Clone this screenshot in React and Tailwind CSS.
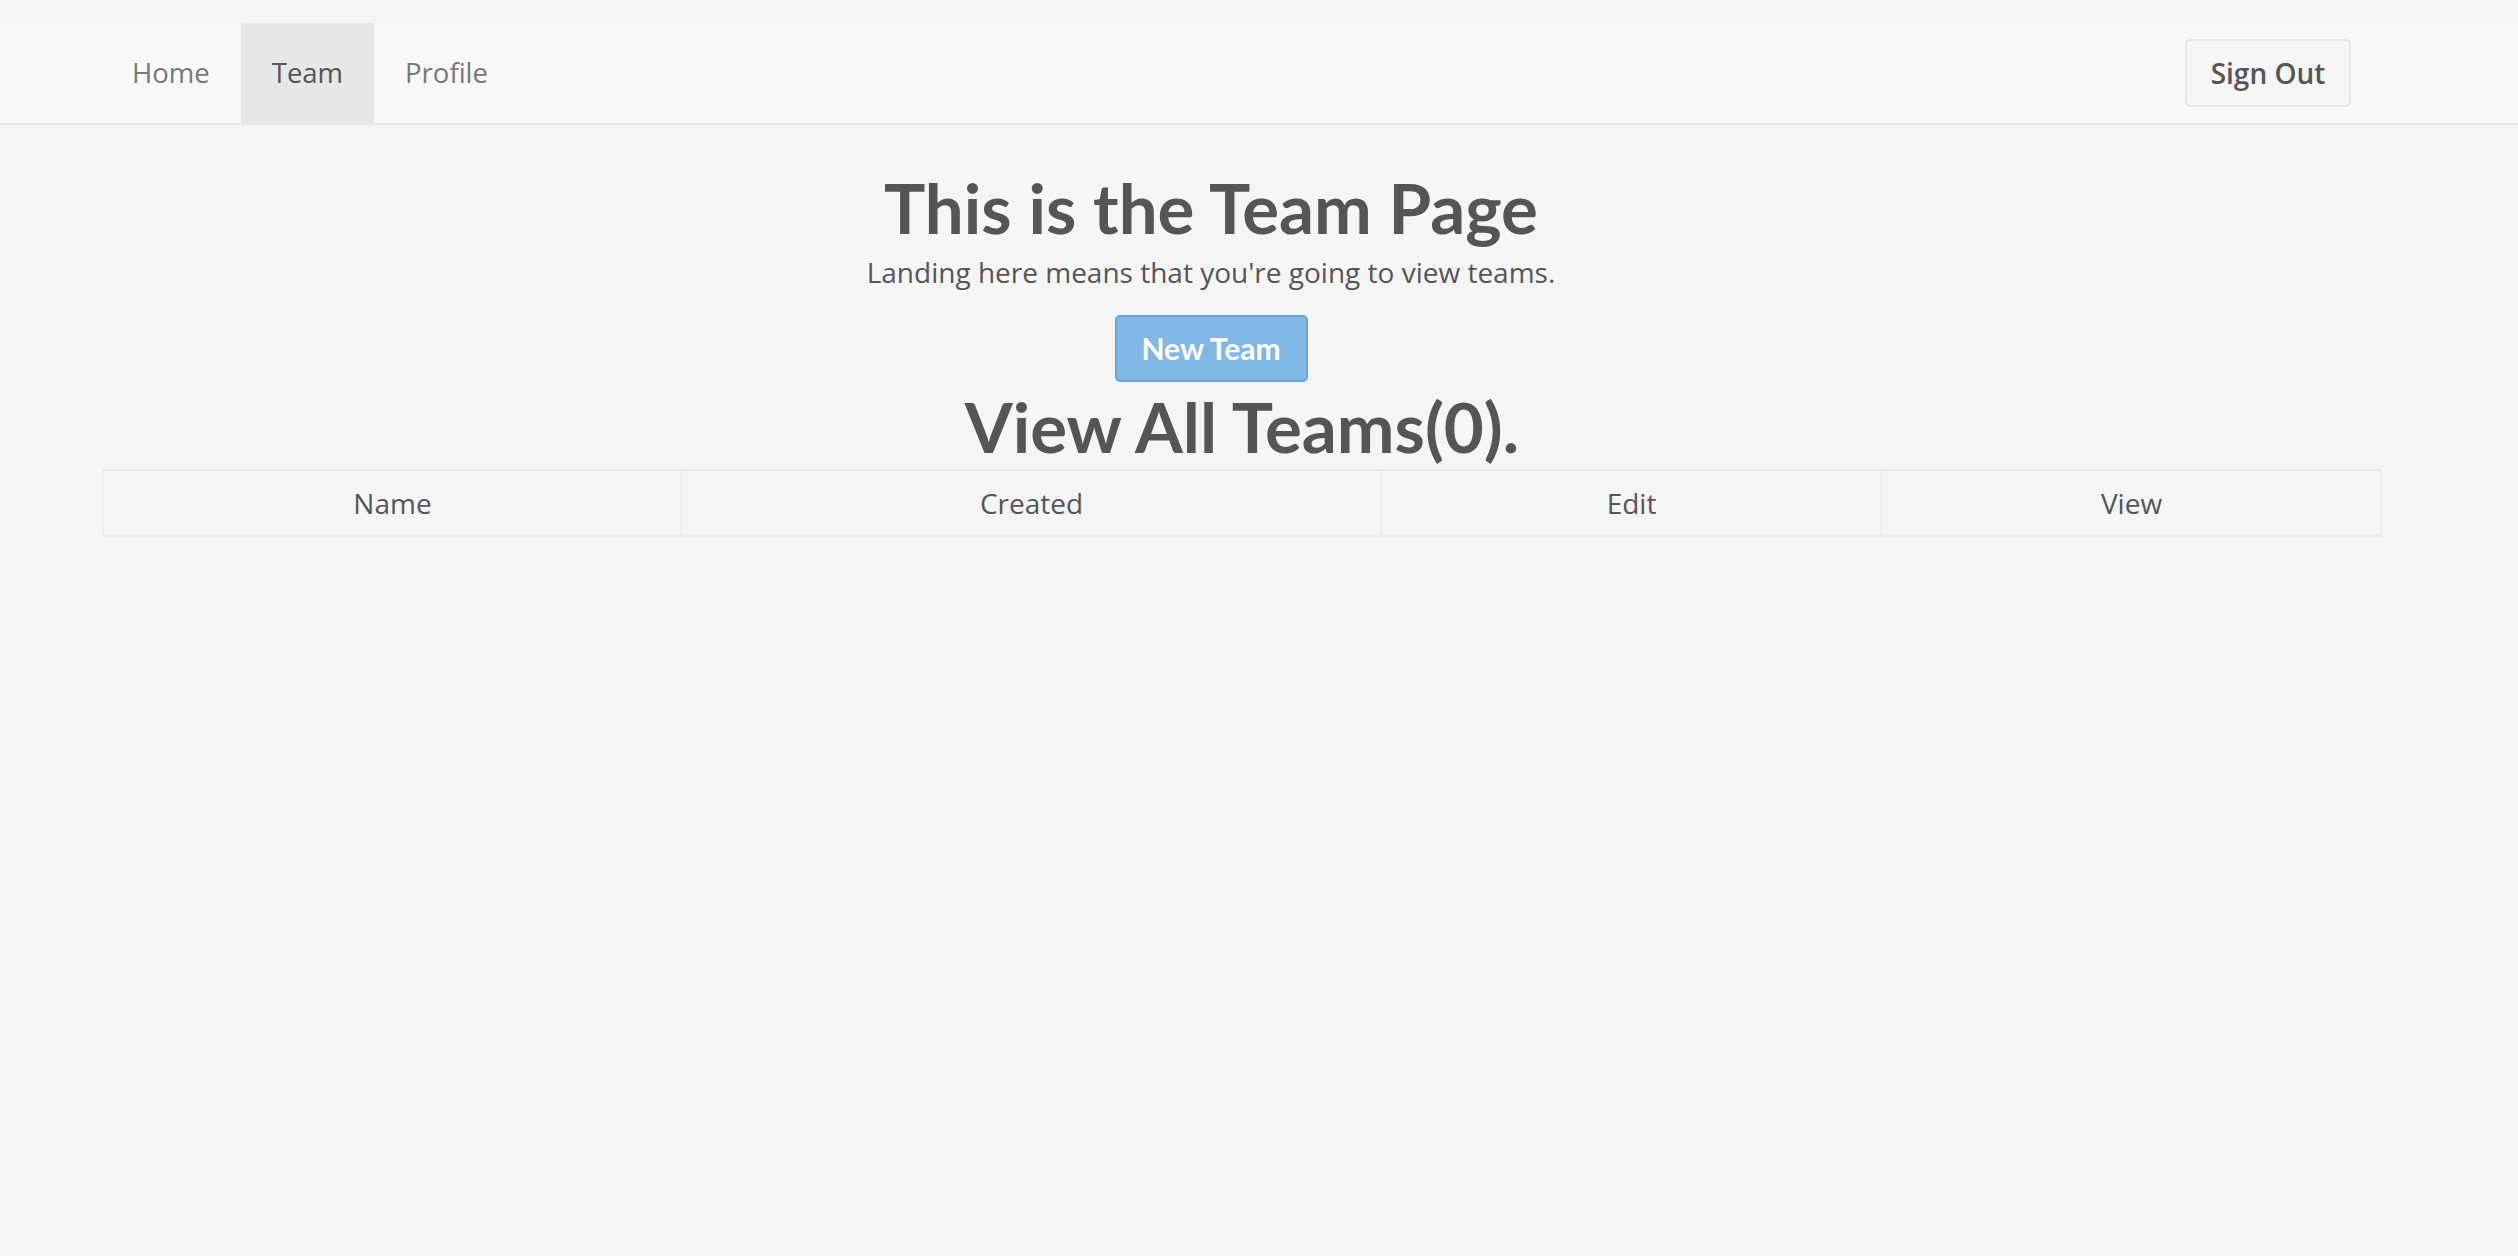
import React from "react";

export default function App() {
  return (
    <div className="min-h-screen bg-[#f5f5f5] pt-[23px] font-['Open_Sans',sans-serif] text-[#555]">
      <nav className="flex h-[102px] items-stretch border-b-2 border-[#e7e7e7] bg-[#f8f8f8] pl-[101px] pr-[167px]">
        <div className="flex items-stretch">
          <a className="flex h-[100px] items-center px-[31px] text-[27.5px] text-[#777]">Home</a>
          <a className="flex h-[100px] items-center bg-[#e7e7e7] px-[31px] text-[27.5px] text-[#555]">Team</a>
          <a className="flex h-[100px] items-center px-[31px] text-[27.5px] text-[#777]">Profile</a>
        </div>
        <div className="flex-1" />
        <div className="flex h-[100px] items-center">
          <button className="flex h-[68px] w-[166px] items-center justify-center rounded-[5px] border-2 border-[#e7e7e7] bg-[#f5f5f5] text-[28px] font-semibold text-[#555]">
            Sign Out
          </button>
        </div>
      </nav>

      <div className="flex w-[2422px] flex-col items-center text-center">
        <h1 className="mt-[48px] font-['Lato',sans-serif] text-[69px] font-bold leading-[69px] text-[#555]">
          This is the Team Page
        </h1>
        <p className="mt-[12px] text-[28px] leading-[36px] text-[#555]">
          Landing here means that you're going to view teams.
        </p>
        <button className="mt-[25px] flex h-[67px] w-[193px] items-center justify-center rounded-[5px] border-2 border-[#64a5de] bg-[#80b7e5] font-['Lato',sans-serif] text-[30px] font-bold text-white">
          New Team
        </button>
      </div>

      <div className="ml-[103px] w-[2278px]">
        <h2 className="mt-[10px] text-center font-['Lato',sans-serif] text-[69px] font-bold leading-[69px] text-[#555]">
          View All Teams(0).
        </h2>
        <table className="mt-[8px] w-[2278px] table-fixed border-collapse">
          <colgroup>
            <col className="w-[578px]" />
            <col className="w-[700px]" />
            <col className="w-[500px]" />
            <col className="w-[500px]" />
          </colgroup>
          <thead>
            <tr className="h-[66px] border-y-2 border-[#e8e8e8]">
              <th className="border-x border-[#ebebeb] p-0 text-center text-[28px] font-normal text-[#555]">Name</th>
              <th className="border-x border-[#ebebeb] p-0 text-center text-[28px] font-normal text-[#555]">Created</th>
              <th className="border-x border-[#ebebeb] p-0 text-center text-[28px] font-normal text-[#555]">Edit</th>
              <th className="border-x border-[#ebebeb] p-0 text-center text-[28px] font-normal text-[#555]">View</th>
            </tr>
          </thead>
        </table>
      </div>
    </div>
  );
}
